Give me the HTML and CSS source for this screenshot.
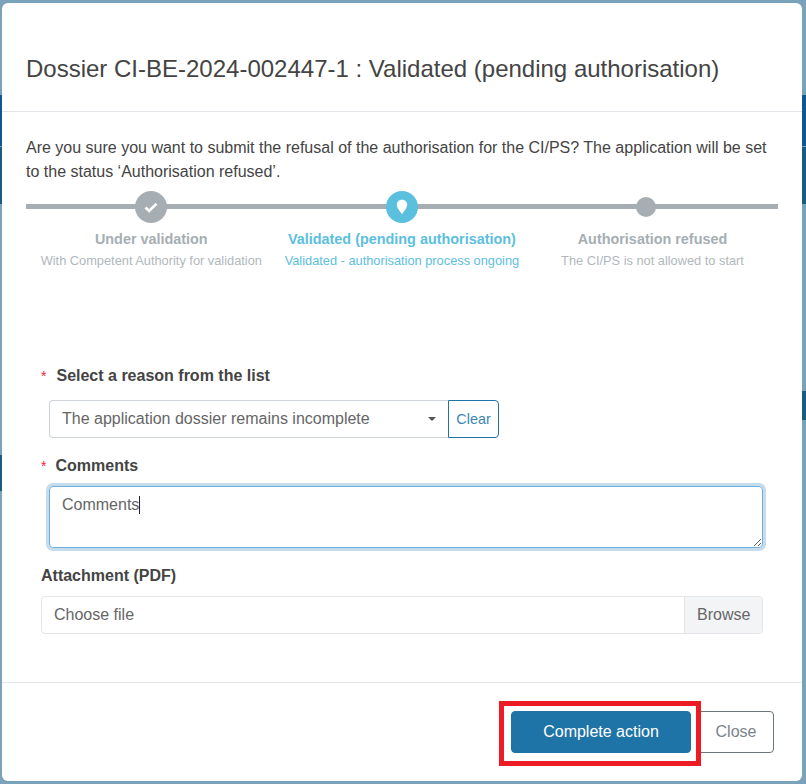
FILE: index.html
```html
<!DOCTYPE html>
<html lang="en">
<head>
  <meta charset="UTF-8" />
  <meta name="viewport" content="width=device-width, initial-scale=1.0"/>
  <title>Dossier action</title>
  <link rel="stylesheet" href="styles.css">
</head>
<body>
  <div class="backdrop-strip strip-a"></div>
  <div class="backdrop-strip strip-b"></div>
  <div class="backdrop-strip strip-c"></div>
  <div class="backdrop-strip strip-d"></div>

  <div class="modal">
    <div class="modal-header">
      <h4>Dossier CI-BE-2024-002447-1 : Validated (pending authorisation)</h4>
    </div>

    <div class="modal-body">
      <p class="intro">Are you sure you want to submit the refusal of the authorisation for the CI/PS? The application will be set to the status ‘Authorisation refused’.</p>

      <div class="stepper">
        <div class="step">
          <div class="step-dot">
            <svg width="16" height="16" viewBox="0 0 16 16"><path d="M2.5 8.5l3.600 3.400 7.400-7.200" fill="none" stroke="#fff" stroke-width="2.600"/></svg>
          </div>
          <div class="step-title">Under validation</div>
          <div class="step-sub">With Competent Authority for validation</div>
        </div>
        <div class="step step-current">
          <div class="step-dot">
            <svg width="12" height="16" viewBox="0 0 12 16"><path d="M6 .8C2.900.8.8 3 .8 5.800c0 3 3.200 6.400 5.200 9.400 2-3 5.200-6.400 5.200-9.400C11.200 3 9.100.8 6 .8z" fill="#fff"/></svg>
          </div>
          <div class="step-title">Validated (pending authorisation)</div>
          <div class="step-sub">Validated - authorisation process ongoing</div>
        </div>
        <div class="step step-next">
          <div class="step-dot"></div>
          <div class="step-title">Authorisation refused</div>
          <div class="step-sub">The CI/PS is not allowed to start</div>
        </div>
      </div>

      <form class="action-form">
        <label class="field-label label-reason"><span class="req">*</span>Select a reason from the list</label>
        <div class="select-row">
          <div class="select-box">
            <span>The application dossier remains incomplete</span>
            <i class="select-arrow"></i>
          </div>
          <button type="button" class="btn-clear">Clear</button>
        </div>

        <label class="field-label label-comments"><span class="req">*</span>Comments</label>
        <div class="textarea-box">Comments<span class="caret"></span></div>

        <label class="field-label label-attach">Attachment (PDF)</label>
        <div class="file-box">
          <span class="file-name">Choose file</span>
          <span class="file-browse">Browse</span>
        </div>
      </form>
    </div>

    <div class="modal-footer">
      <div class="highlight-box"></div>
      <button type="button" class="btn-complete">Complete action</button>
      <button type="button" class="btn-close">Close</button>
    </div>
  </div>
</body>
</html>
```

FILE: styles.css
```css
* {
  box-sizing: border-box;
}
body {
  margin: 0;
  height: 784px;
  overflow: hidden;
  background: #7aa3bb;
  font-family: "Liberation Sans", Arial, sans-serif;
  color: #444;
}

/* bits of the page behind the backdrop */
.backdrop-strip {
  position: absolute;
  left: 0;
  width: 806px;
}
.strip-a {
  top: 95px;
  height: 51px;
  background: #12568f;
}
.strip-b {
  top: 147px;
  height: 57px;
  background: #1b5b7e;
}
.strip-c {
  top: 391px;
  left: 780px;
  width: 26px;
  height: 29px;
  background: #1b5b7e;
}
.strip-d {
  top: 455px;
  width: 20px;
  height: 36px;
  background: #1b5b7e;
}

.modal {
  position: relative;
  width: 800px;
  height: 778px;
  margin: 3px 0 0 2px;
  background: #fff;
  border-radius: 6px;
  display: flex;
  flex-direction: column;
}
.modal-header {
  height: 109px;
  padding: 48px 24px 0;
  border-bottom: 1px solid #e1e4e8;
}
h4 {
  margin: 0;
  font-size: 24px;
  font-weight: 400;
  line-height: 36px;
  white-space: nowrap;
}
.modal-body {
  flex: 1;
  padding: 24px 24px 0;
}
.intro {
  margin: 0;
  font-size: 16px;
  line-height: 24px;
}

.stepper {
  position: relative;
  display: grid;
  grid-template-columns: repeat(3, 250.6px);
  margin-top: 7px;
  height: 100px;
  text-align: center;
}
.stepper::before {
  content: "";
  position: absolute;
  top: 13px;
  left: 0;
  right: 0;
  height: 5px;
  background: #a6aeb4;
}
.step {
  position: relative;
  display: flex;
  flex-direction: column;
  align-items: center;
}
.step-dot {
  width: 32px;
  height: 32px;
  border-radius: 50%;
  background: #a6aeb4;
  display: flex;
  align-items: center;
  justify-content: center;
}
.step-title {
  margin-top: 6px;
  font-size: 14.4px;
  font-weight: 700;
  line-height: 20px;
  color: #a6aeb4;
}
.step-sub {
  margin-top: 2px;
  font-size: 12.8px;
  line-height: 20px;
  color: #b0b8bd;
  white-space: nowrap;
}
.step-current .step-dot {
  background: #5bc0de;
}
.step-current .step-title,
.step-current .step-sub {
  color: #5bc0de;
}
.step-next .step-dot {
  width: 20px;
  height: 20px;
  margin: 6px 12px 6px 0;
}

.action-form {
  margin-top: 74px;
  margin-left: 15px;
  width: 722px;
}
.field-label {
  display: block;
  font-size: 16px;
  font-weight: 700;
  line-height: 22px;
}
.req {
  color: #f5223f;
  font-size: 14px;
  font-weight: 400;
  margin-right: 9px;
}
.label-reason .req {
  margin-right: 10px;
}
.select-row {
  display: flex;
  margin: 13px 0 0 8px;
}
.select-box {
  width: 399px;
  height: 38px;
  padding: 0 12px;
  border: 1px solid #ced4da;
  border-right: 0;
  border-radius: 4px 0 0 4px;
  font-size: 16px;
  color: #666;
  display: flex;
  align-items: center;
  justify-content: space-between;
}
.select-arrow {
  width: 0;
  height: 0;
  border-left: 4px solid transparent;
  border-right: 4px solid transparent;
  border-top: 4px solid #555;
}
.btn-clear {
  width: 51px;
  height: 38px;
  padding: 0;
  background: #fff;
  border: 1px solid #1f74a7;
  border-radius: 0 4px 4px 0;
  font: 14.4px "Liberation Sans", Arial, sans-serif;
  color: #3a86b4;
}
.label-comments {
  margin-top: 17px;
}
.textarea-box {
  width: 714px;
  height: 62px;
  margin: 9px 0 0 8px;
  padding: 6px 12px;
  border: 1px solid #6db0e0;
  border-radius: 4px;
  box-shadow: 0 0 0 3px #c5dcec;
  font-size: 16px;
  line-height: 24px;
  color: #666;
  overflow: auto;
  resize: vertical;
}
.caret {
  display: inline-block;
  width: 1px;
  height: 18px;
  vertical-align: -4px;
  background: #222;
}
.label-attach {
  margin-top: 17px;
}
.file-box {
  display: flex;
  height: 38px;
  margin-top: 9px;
  border: 1px solid #e4e6e9;
  border-radius: 4px;
  font-size: 16px;
  line-height: 36px;
  color: #666;
}
.file-name {
  flex: 1;
  padding-left: 12px;
}
.file-browse {
  width: 78px;
  padding-left: 12px;
  background: #f3f4f6;
  border-left: 1px solid #e4e6e9;
  border-radius: 0 3px 3px 0;
}

.modal-footer {
  position: relative;
  height: 99px;
  border-top: 1px solid #e1e4e8;
  display: flex;
  justify-content: flex-end;
  align-items: flex-start;
  padding: 28px 28px 0 0;
}
.btn-complete,
.btn-close {
  height: 42px;
  border-radius: 4px;
  font: 16px "Liberation Sans", Arial, sans-serif;
}
.btn-complete {
  width: 180px;
  background: #1f74a7;
  border: 1px solid #1f74a7;
  color: #fff;
}
.btn-close {
  width: 78px;
  margin-left: 5px;
  padding-left: 8px;
  background: #fff;
  border: 1px solid #6c757d;
  color: #7b838a;
}
.highlight-box {
  position: absolute;
  left: 497px;
  top: 18px;
  width: 202px;
  height: 65px;
  border: 5px solid #ed1c24;
  z-index: 1;
}
```
